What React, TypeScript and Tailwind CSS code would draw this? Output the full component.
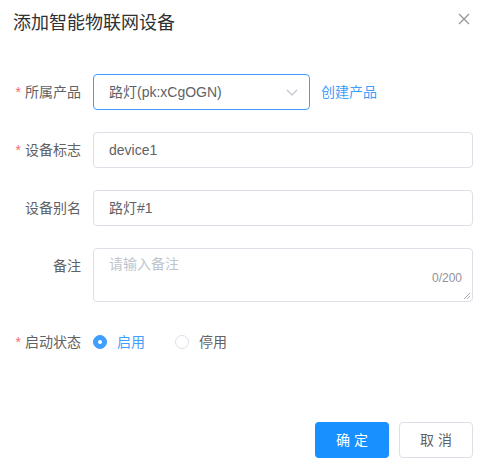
import { useState } from "react";

const font = { fontFamily: '"Liberation Sans", "Noto Sans CJK SC", sans-serif' };

function Label({ text, required }: { text: string; required?: boolean }) {
  return (
    <div className="w-[93px] shrink-0 pr-3 text-right text-[14px] leading-[36px] text-[#606266]">
      {required && <span className="mr-1 text-[#f56c6c]">*</span>}
      {text}
    </div>
  );
}

export default function App() {
  const [status, setStatus] = useState("on");

  return (
    <div className="h-[473px] w-[483px] bg-white" style={font}>
      {/* header */}
      <div className="flex items-start justify-between pl-[13px] pr-[13px] pt-[11px]">
        <h1 className="text-[18px] leading-[24px] text-[#303133]">添加智能物联网设备</h1>
        <button className="mt-[2px] text-[#909399]">
          <svg width="12" height="12" viewBox="0 0 12 12" fill="none" stroke="currentColor" strokeWidth="1.2">
            <path d="M1 1L11 11M11 1L1 11" />
          </svg>
        </button>
      </div>

      {/* form */}
      <div className="mt-[39px] flex flex-col gap-[22px] pr-[10px]">
        <div className="flex items-center">
          <Label text="所属产品" required />
          <div className="flex h-[36px] w-[217px] items-center justify-between rounded border border-[#409eff] pl-[15px] pr-[10px] text-[14px] text-[#606266]">
            <span>路灯(pk:xCgOGN)</span>
            <svg width="14" height="14" viewBox="0 0 14 14" fill="none" stroke="#c0c4cc" strokeWidth="1.2">
              <path d="M2 5L7 10L12 5" />
            </svg>
          </div>
          <span className="ml-[11px] text-[14px] text-[#409eff]">创建产品</span>
        </div>

        <div className="flex items-center">
          <Label text="设备标志" required />
          <div className="flex h-[36px] flex-1 items-center rounded border border-[#dcdfe6] px-[15px] text-[14px] text-[#606266]">
            device1
          </div>
        </div>

        <div className="flex items-center">
          <Label text="设备别名" />
          <div className="flex h-[36px] flex-1 items-center rounded border border-[#dcdfe6] px-[15px] text-[14px] text-[#606266]">
            路灯#1
          </div>
        </div>

        <div className="flex items-start">
          <Label text="备注" />
          <div className="relative h-[54px] flex-1 rounded border border-[#dcdfe6] px-[15px] pt-[5px] text-[14px] leading-[21px] text-[#c0c4cc]">
            请输入备注
            <span className="absolute bottom-[12px] right-[10px] text-[12px] text-[#909399]">0/200</span>
            <svg className="absolute bottom-[1px] right-[1px]" width="8" height="8" viewBox="0 0 8 8" stroke="#909399" strokeWidth="0.8">
              <path d="M7 1L1 7M7 4L4 7" />
            </svg>
          </div>
        </div>

        <div className="flex items-center">
          <Label text="启动状态" required />
          <div className="flex items-center text-[14px]">
            <button className="flex items-center" onClick={() => setStatus("on")}>
              <span
                className={
                  status === "on"
                    ? "flex h-[14px] w-[14px] items-center justify-center rounded-full border border-[#409eff] bg-[#409eff]"
                    : "h-[14px] w-[14px] rounded-full border border-[#dcdfe6] bg-white"
                }
              >
                {status === "on" && <span className="h-[4px] w-[4px] rounded-full bg-white" />}
              </span>
              <span className={status === "on" ? "ml-[10px] text-[#409eff]" : "ml-[10px] text-[#606266]"}>启用</span>
            </button>
            <button className="ml-[30px] flex items-center" onClick={() => setStatus("off")}>
              <span
                className={
                  status === "off"
                    ? "flex h-[14px] w-[14px] items-center justify-center rounded-full border border-[#409eff] bg-[#409eff]"
                    : "h-[14px] w-[14px] rounded-full border border-[#dcdfe6] bg-white"
                }
              >
                {status === "off" && <span className="h-[4px] w-[4px] rounded-full bg-white" />}
              </span>
              <span className={status === "off" ? "ml-[10px] text-[#409eff]" : "ml-[10px] text-[#606266]"}>停用</span>
            </button>
          </div>
        </div>
      </div>

      {/* footer */}
      <div className="mt-[62px] flex justify-end gap-[10px] pr-[10px]">
        <button className="h-[36px] w-[74px] rounded bg-[#1890ff] pl-[4px] text-[14px] tracking-[4px] text-white">确定</button>
        <button className="h-[36px] w-[74px] rounded border border-[#dcdfe6] bg-white pl-[4px] text-[14px] tracking-[4px] text-[#606266]">
          取消
        </button>
      </div>
    </div>
  );
}
